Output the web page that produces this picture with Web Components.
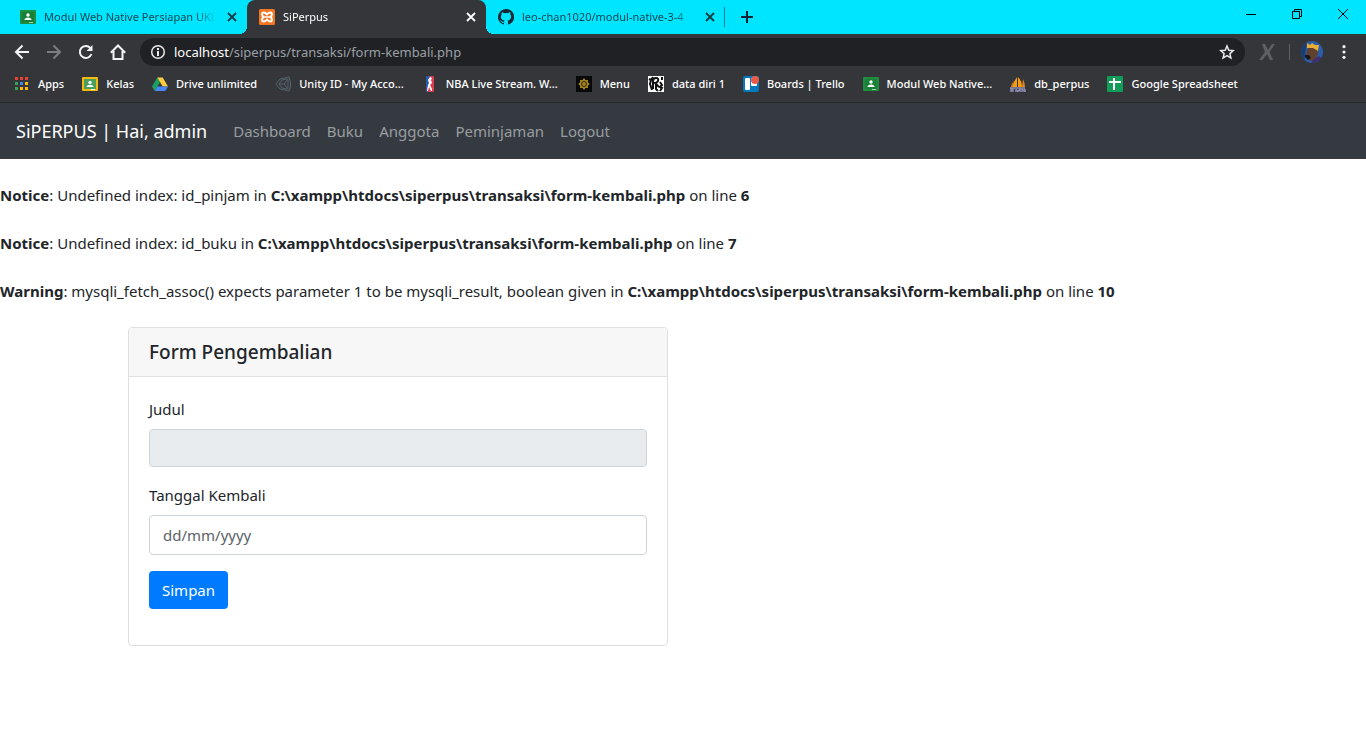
<!DOCTYPE html>
<html lang="id">
<head>
<meta charset="utf-8">
<title>SiPerpus</title>
<style>
html { --ui: "Noto Sans", "Open Sans", sans-serif; }
body { margin: 0; background: #fff; font: 15px/24px var(--ui); color: #212529; }
</style>
</head>
<body>
<browser-window>
  <tab-strip slot="tabs">
    <browser-tab label="Modul Web Native Persiapan UKL" icon="classroom"></browser-tab>
    <browser-tab label="SiPerpus" icon="xampp" active></browser-tab>
    <browser-tab label="leo-chan1020/modul-native-3-4" icon="github"></browser-tab>
  </tab-strip>
  <browser-toolbar slot="toolbar"></browser-toolbar>
  <bookmark-bar slot="bookmarks">
    <book-mark icon="apps">Apps</book-mark>
    <book-mark icon="kelas">Kelas</book-mark>
    <book-mark icon="drive">Drive unlimited</book-mark>
    <book-mark icon="unity">Unity ID - My Acco...</book-mark>
    <book-mark icon="nba">NBA Live Stream. W...</book-mark>
    <book-mark icon="menu">Menu</book-mark>
    <book-mark icon="data">data diri 1</book-mark>
    <book-mark icon="trello">Boards | Trello</book-mark>
    <book-mark icon="classroom">Modul Web Native...</book-mark>
    <book-mark icon="pma">db_perpus</book-mark>
    <book-mark icon="sheet">Google Spreadsheet</book-mark>
  </bookmark-bar>
  <site-navbar brand="SiPERPUS | Hai, admin">
    <nav-link>Dashboard</nav-link>
    <nav-link>Buku</nav-link>
    <nav-link>Anggota</nav-link>
    <nav-link>Peminjaman</nav-link>
    <nav-link>Logout</nav-link>
  </site-navbar>
  <php-messages>
    <php-message level="Notice" file="C:\xampp\htdocs\siperpus\transaksi\form-kembali.php" line="6">Undefined index: id_pinjam</php-message>
    <php-message level="Notice" file="C:\xampp\htdocs\siperpus\transaksi\form-kembali.php" line="7">Undefined index: id_buku</php-message>
    <php-message level="Warning" file="C:\xampp\htdocs\siperpus\transaksi\form-kembali.php" line="10">mysqli_fetch_assoc() expects parameter 1 to be mysqli_result, boolean given</php-message>
  </php-messages>
  <page-container>
    <form-card heading="Form Pengembalian">
      <form-field label="Judul" disabled></form-field>
      <form-field label="Tanggal Kembali" hint="dd/mm/yyyy"></form-field>
      <submit-button>Simpan</submit-button>
    </form-card>
  </page-container>
</browser-window>

<script>
const ICONS = {
  classroom: '<rect y="1" width="16" height="14" rx="1" fill="#1e8e3e"/><rect x="2" y="3" width="12" height="10" fill="#188038"/><circle cx="8" cy="6" r="1.7" fill="#fff"/><path d="M4.500 11V10.200Q5.200 8.500 8 8.500T11.500 10.200V11Z" fill="#fff"/><path d="M9 13h4v1H9z" fill="#9fd0a8"/>',
  kelas: '<rect y="1" width="16" height="14" rx="1" fill="#f4b912"/><rect x="2" y="3" width="12" height="10" fill="#48a05a"/><circle cx="8" cy="6.500" r="1.700" fill="#fff"/><path d="M4.500 11V10.400Q5.200 8.800 8 8.800T11.500 10.400V11Z" fill="#fff"/><path d="M9 13h4v1H9z" fill="#fff"/>',
  xampp: '<rect width="16" height="16" rx="1.500" fill="#f37623"/><path fill="none" stroke="#fff" stroke-width="2" stroke-linejoin="round" d="M8 5.500Q6.500 3.500 4.800 3.500 3 3.700 3 5.500 3.200 7.500 5 8 3.200 8.500 3 10.500 3 12.300 4.800 12.500 6.500 12.500 8 10.500 9.500 12.500 11.200 12.500 13 12.300 13 10.500 12.800 8.500 11 8 12.800 7.500 13 5.500 13 3.700 11.200 3.500 9.500 3.500 8 5.500z"/><path d="M6 8h4" stroke="#fff" stroke-width="1.500"/>',
  github: '<path fill="#142a36" d="M8 0a8 8 0 0 0-2.530 15.590c.400.070.550-.170.550-.380v-1.340c-2.230.490-2.700-1.070-2.700-1.070-.360-.920-.890-1.170-.890-1.170-.730-.500.050-.490.050-.490.810.060 1.230.830 1.230.830.720 1.230 1.880.870 2.340.670.070-.520.280-.870.510-1.070-1.780-.200-3.640-.890-3.640-3.950 0-.870.310-1.590.820-2.150-.080-.200-.360-1.020.080-2.120 0 0 .670-.210 2.200.820a7.600 7.600 0 0 1 4 0c1.530-1.040 2.200-.820 2.200-.820.440 1.100.160 1.920.080 2.120.510.560.820 1.270.820 2.150 0 3.070-1.870 3.750-3.650 3.950.290.250.540.730.540 1.480v2.190c0 .210.150.460.550.380A8 8 0 0 0 8 0z"/>',
  apps: '<g><path fill="#ea4335" d="M1 1h3v3H1zM6 1h3v3H6zM11 1h3v3h-3z"/><path fill="#34a853" d="M1 6h3v3H1zM1 11h3v3H1z"/><path fill="#4285f4" d="M6 6h3v3H6z"/><path fill="#fbbc05" d="M11 6h3v3h-3zM6 11h3v3H6zM11 11h3v3h-3z"/></g>',
  drive: '<path fill="#1aa15f" d="M5.300 1.500L8 6.200 2.700 15 0 10.500z"/><path fill="#ffcd40" d="M5.300 1.500h5.400L16 10.500h-5.300z"/><path fill="#4688f4" d="M5.400 10.500H16L13.300 15H2.700z"/>',
  unity: '<g fill="none" stroke="#55646e" stroke-width="1"><path d="M1 8L5 3l9-2 1.500 5v5L14 15l-9-2zM4 8L7 4l5-1M4 8l3 4 5 1M4 8h5l4-5M9 8l4 5M13 3v10"/></g>',
  nba: '<rect x="4" width="8" height="16" rx="1" fill="#e03a4e"/><path fill="#1d5fb0" d="M5 0h3L6 4l1 4-2 4 1 4H5q-1 0-1-1V1q0-1 1-1z"/><path fill="#fff" d="M8 1l2 1-1 2 1 3-2 2 2 4v2H9l-2-4-1 4H5l1-6 1-2-1-3z"/>',
  menu: '<rect width="16" height="16" fill="#080808"/><path fill="#9c8224" d="M8 2l1.500 2 2.500 0v2.500L14 8l-2 1.500V12H9.500L8 14l-1.500-2H4V9.500L2 8l2-1.500V4h2.500z"/><circle cx="8" cy="8" r="2.500" fill="none" stroke="#382e0c"/>',
  data: '<rect width="16" height="16" fill="#fff"/><path fill="none" stroke="#111" stroke-width="2" d="M1 3l2 1-1 4 2 6M3 4l2-3M5 13V5q0-3 3-3t2 3q-1 2-3 2l4 4M8 8v5l2 2M12 6l2 3-2 2 2 1-2 3M14 1v3"/>',
  trello: '<rect width="16" height="16" rx="2" fill="#0079bf"/><rect x="2" y="2" width="5" height="12" rx="1" fill="#fff"/><rect x="8" y="2" width="6" height="8" rx="1" fill="#fff"/><circle cx="12" cy="4" r="4" fill="#eb5a46"/>',
  pma: '<path fill="#f89c0e" d="M7 1Q4 5 2 11h5zM8 1q4 4 4 10H8z"/><path fill="#d98529" d="M13 3q2 4 2 8h-3zM4 5Q1 8 1 11h1z"/><path fill="none" stroke="#8b89ae" stroke-width="1.500" d="M0 12h15M1 16v-3h2v2H1M6 13v3M6 14l2 1 2-2v3M12 16v-3l2 2 1-2v3"/>',
  sheet: '<rect width="16" height="16" rx="1" fill="#0f9d58"/><path fill="#fff" d="M6 2h2v3h6v2H8v7H6V7H2V5h4z"/>',
  close: '<path d="M4 4l8 8M12 4l-8 8" fill="none" stroke="currentColor" stroke-width="1.800"/>',
  plus: '<path d="M8 2v12M2 8h12" fill="none" stroke="currentColor" stroke-width="2"/>',
  back: '<path d="M15 8H2M8.500 1.500L2 8l6.500 6.500" fill="none" stroke="currentColor" stroke-width="2"/>',
  forward: '<path d="M1 8h13M7.500 1.500L14 8l-6.500 6.500" fill="none" stroke="currentColor" stroke-width="2"/>',
  reload: '<path d="M13.500 10A6 6 0 1 1 12.300 3.900" fill="none" stroke="currentColor" stroke-width="2"/><path d="M14.500 1v6h-6z" fill="currentColor"/>',
  home: '<path d="M.800 8.700L8 1.500l7.200 7.200M3.500 7v8h9V7" fill="none" stroke="currentColor" stroke-width="2"/>',
  info: '<circle cx="8" cy="8" r="6.300" fill="none" stroke="currentColor" stroke-width="1.500"/><path d="M7 4h2v2H7zM7 7h2v5H7z" fill="currentColor"/>',
  star: '<path d="M8 2l1.800 4.200 4.500.400-3.400 3 1 4.400L8 11.700 4.100 14l1-4.400-3.400-3 4.500-.400z" fill="none" stroke="currentColor" stroke-width="1.500"/>',
  ext: '<path d="M3 0h3l3 6 4-6h3l-5.500 8L14 16h-3L8 10l-4.500 6H0l6-8z" fill="#5f6063"/>',
  dots: '<circle cx="8" cy="2.700" r="1.600" fill="currentColor"/><circle cx="8" cy="8" r="1.600" fill="currentColor"/><circle cx="8" cy="13.300" r="1.600" fill="currentColor"/>',
  min: '<path d="M3 8.500h10" stroke="currentColor"/>',
  restore: '<path d="M3.500 5.500h7v7h-7zM5.500 5.500v-2h7v7h-2" fill="none" stroke="currentColor"/>',
  quit: '<path d="M3 3l10 10M13 3L3 13" fill="none" stroke="currentColor"/>'
};
const icon = name => `<svg class="i" viewBox="0 0 16 16" width="16" height="16" aria-hidden="true">${ICONS[name]}</svg>`;
const BASE = ':host,*{box-sizing:border-box}.i{display:block;flex:none}button{border:0;background:none;padding:0;color:inherit;font:inherit;display:flex;align-items:center;justify-content:center}a{color:inherit;text-decoration:none}';
function define(name, render) {
  customElements.define(name, class extends HTMLElement {
    constructor() {
      super();
      this.attachShadow({ mode: 'open' });
    }
    connectedCallback() {
      const t = document.createElement('template');
      const [css, html] = render(this);
      t.innerHTML = `<style>${BASE}${css}</style>${html}`;
      this.shadowRoot.replaceChildren(t.content.cloneNode(true));
    }
  });
}

define('browser-window', () => [
  ':host{display:block}header{background:#35363a;border-bottom:1px solid #28292b}',
  '<header><slot name="tabs"></slot><slot name="toolbar"></slot><slot name="bookmarks"></slot></header><main><slot></slot></main>'
]);

define('tab-strip', () => [
  `:host{display:flex;height:34px;background:#00e5ff;color:#123;padding-left:8px}
   .new{width:44px}.sys{display:flex;margin-left:auto;color:#000}.sys button{width:46px;height:28px}`,
  `<slot></slot><button class="new" aria-label="Tab baru">${icon('plus')}</button>
   <div class="sys"><button aria-label="Kecilkan">${icon('min')}</button><button aria-label="Pulihkan">${icon('restore')}</button><button aria-label="Tutup">${icon('quit')}</button></div>`
]);

define('browser-tab', el => [
  `:host{display:flex;flex:0 1 239px;min-width:0;align-items:center;gap:8px;padding:0 7px 0 12px;font:11px/16px var(--ui);color:#0b4650;position:relative}
   :host([active]){background:#35363a;color:#fff;border-radius:8px 8px 0 0}
   :host([active])::before,:host([active])::after{content:"";position:absolute;bottom:0;width:8px;height:8px}
   :host([active])::before{left:-8px;background:radial-gradient(circle at 0 0,transparent 8px,#35363a 8px)}
   :host([active])::after{right:-8px;background:radial-gradient(circle at 100% 0,transparent 8px,#35363a 8px)}
   :host(:last-of-type)::after{content:"";position:absolute;right:0;top:7px;width:1px;height:20px;background:#087d8c}
   a{flex:1;min-width:0;overflow:hidden;white-space:nowrap;-webkit-mask-image:linear-gradient(90deg,#000 calc(100% - 20px),transparent);mask-image:linear-gradient(90deg,#000 calc(100% - 20px),transparent)}
   button{width:16px;height:16px;color:#123c44}:host([active]) button{color:#fff}`,
  `${icon(el.getAttribute('icon'))}<a href="#">${el.getAttribute('label')}</a><button aria-label="Tutup tab">${icon('close')}</button>`
]);

define('browser-toolbar', () => [
  `:host{display:flex;align-items:center;height:36px;padding:0 14px 0 6px;color:#f1f3f4}
   button{width:32px;height:28px}.off{color:#7d7e81}
   .omni{flex:1;display:flex;align-items:center;gap:8px;height:28px;margin-left:6px;padding:0 10px;border-radius:14px;background:#202124;font:13px/20px var(--ui);color:#9aa0a6}
   .omni .i{color:#e8eaed}.omni span{flex:1}.omni b{font-weight:400;color:#fff}.omni button{width:16px}
   .ext{width:44px}.sep{width:1px;height:16px;background:#606164;margin:0 10px 0 0}.ava{width:24px}.menu{width:16px;margin-left:12px}`,
  `<button aria-label="Kembali">${icon('back')}</button><button class="off" aria-label="Maju">${icon('forward')}</button>
   <button aria-label="Muat ulang">${icon('reload')}</button><button aria-label="Beranda">${icon('home')}</button>
   <div class="omni">${icon('info')}<span><b>localhost</b>/siperpus/transaksi/form-kembali.php</span><button aria-label="Bookmark">${icon('star')}</button></div>
   <button class="ext" aria-label="Ekstensi">${icon('ext')}</button><div class="sep"></div>
   <button class="ava" aria-label="Profil"><svg width="22" height="22" viewBox="0 0 22 22"><defs><clipPath id="c"><circle cx="11" cy="11" r="11"/></clipPath></defs><g clip-path="url(#c)"><path fill="#2a5da8" d="M0 0h22v22H0z"/><path fill="#1a3d74" d="M0 0h6L3 22H0z"/><path fill="#60412f" d="M7 6l10 2 0 5-4 7-6-1-2-5z"/><path fill="#17161c" d="M4 14l4 0 2 3-3 2-3-3z"/><path fill="#41306f" d="M10 22l3-4 5-3 4 3v4z"/><path fill="#eaae35" d="M6 2l3 2 2-2 3 2 4 0-1 6-5-3-6 0z"/></g></svg></button>
   <button class="menu" aria-label="Menu">${icon('dots')}</button>`
]);

define('bookmark-bar', () => [
  ':host{display:flex;align-items:center;gap:18px;height:32px;padding:0 14px 4px;color:#fff;overflow:hidden}',
  '<slot></slot>'
]);

define('book-mark', el => [
  ':host{display:block;flex:none;font:500 11px/16px var(--ui)}a{display:flex;align-items:center;gap:8px;white-space:nowrap}',
  `<a href="#">${icon(el.getAttribute('icon'))}<slot></slot></a>`
]);

define('site-navbar', el => [
  `:host{display:flex;align-items:center;min-height:56px;padding:8px 16px;background:#343a40}
   .brand{color:#fff;font-size:18px;line-height:30px;margin-right:18px;white-space:nowrap}nav{display:flex}`,
  `<a class="brand" href="#">${el.getAttribute('brand')}</a><nav><slot></slot></nav>`
]);

define('nav-link', () => [
  ':host{display:block}a{display:block;padding:8px;color:#9a9da0}',
  '<a href="#"><slot></slot></a>'
]);

define('php-messages', () => [
  ':host{display:flex;flex-direction:column;gap:24px;padding:24px 0}', '<slot></slot>'
]);

define('php-message', el => [
  ':host{display:block}b{font-weight:700}',
  `<b>${el.getAttribute('level')}</b>: <slot></slot> in <b>${el.getAttribute('file')}</b> on line <b>${el.getAttribute('line')}</b>`
]);

define('page-container', () => [
  ':host{display:grid;grid-template-columns:1fr 1fr;gap:30px;max-width:1140px;margin:0 auto;padding:0 15px}',
  '<slot></slot>'
]);

define('form-card', el => [
  `:host{display:block;border:1px solid #dfdfdf;border-radius:4px;overflow:hidden;background:#fff}
   h5{margin:0;padding:12px 20px;background:#f7f7f7;border-bottom:1px solid #dfdfdf;font-size:19px;line-height:24px;font-weight:500}
   form{display:flex;flex-direction:column;align-items:stretch;gap:16px;padding:20px 20px 36px}`,
  `<h5>${el.getAttribute('heading')}</h5><form><slot></slot></form>`
]);

define('form-field', el => [
  `:host{display:block}label{display:block;margin-bottom:8px}
   input{display:block;width:100%;height:40px;padding:6px 13px;border:1px solid #ced4da;border-radius:4px;background:#fff;color:#495057;font:inherit}
   input::placeholder{color:#5b6167;opacity:1}input:disabled{background:#e9ecef;height:38px}`,
  `<label for="f">${el.getAttribute('label')}</label><input id="f" type="text" placeholder="${el.getAttribute('hint') || ''}"${el.hasAttribute('disabled') ? ' disabled' : ''}>`
]);

define('submit-button', () => [
  ':host{display:flex}button{height:38px;padding:6px 13px;border-radius:4px;background:#007bff;color:#fff}',
  '<button type="submit"><slot></slot></button>'
]);
</script>
</body>
</html>
